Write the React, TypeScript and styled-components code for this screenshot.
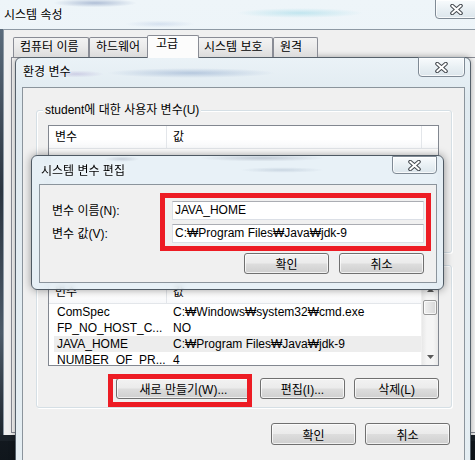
import React from "react";
import styled, { createGlobalStyle } from "styled-components";

const GlobalStyle = createGlobalStyle`
  * { box-sizing: border-box; }
  html, body { margin: 0; padding: 0; }
  body {
    background: #26303a;
    font-family: "Liberation Sans", "Noto Sans CJK KR", sans-serif;
    font-size: 12px;
    color: #000;
  }
`;

const Desktop = styled.div`
  position: relative;
  width: 475px;
  height: 460px;
  overflow: hidden;
  background: linear-gradient(180deg, #4b5b6b 0%, #1c242d 70%, #10161c 100%);
`;

/* ---------- window chrome ---------- */

const OuterWindow = styled.section`
  position: absolute;
  left: 0;
  top: 0;
  width: 482px;
  height: 441px;
  display: flex;
  flex-direction: column;
  background:
    radial-gradient(ellipse 60px 6px at 95px 3px, rgba(60, 90, 150, 0.35), transparent 70%),
    radial-gradient(ellipse 90px 7px at 300px 13px, rgba(110, 200, 220, 0.35), transparent 70%),
    radial-gradient(ellipse 50px 5px at 160px 24px, rgba(120, 150, 200, 0.2), transparent 70%),
    linear-gradient(180deg, #eef5f9 0%, #e3edf3 100%);
`;

const EnvWindow = styled.section`
  position: absolute;
  left: 15px;
  top: 57px;
  width: 456px;
  height: 420px;
  border: 1px solid #56616b;
  border-radius: 6px 6px 0 0;
  padding: 0 5px 0 6px;
  display: flex;
  flex-direction: column;
  background:
    radial-gradient(ellipse 120px 7px at 175px 15px, rgba(70, 110, 170, 0.3), transparent 70%),
    radial-gradient(ellipse 40px 5px at 60px 16px, rgba(90, 60, 160, 0.18), transparent 70%),
    linear-gradient(180deg, #eaf2f7 0%, #e0eaf0 40px, #e5eef3 100%);
  box-shadow: 0 0 6px rgba(0, 0, 0, 0.35);
`;

const EditDialog = styled.section`
  position: absolute;
  left: 31px;
  top: 155px;
  width: 413px;
  height: 135px;
  border: 1px solid #4f5a64;
  border-radius: 6px;
  padding: 0 6px 6px 7px;
  display: flex;
  flex-direction: column;
  background:
    radial-gradient(ellipse 90px 5px at 230px 2px, rgba(120, 130, 150, 0.35), transparent 70%),
    radial-gradient(ellipse 60px 4px at 250px 14px, rgba(130, 150, 175, 0.3), transparent 70%),
    radial-gradient(ellipse 25px 4px at 90px 3px, rgba(120, 130, 150, 0.3), transparent 70%),
    radial-gradient(ellipse 30px 8px at 105px 40px, rgba(140, 160, 190, 0.18), transparent 70%),
    rgba(228, 239, 246, 0.85);
  backdrop-filter: blur(2.5px);
  box-shadow: 0 0 9px rgba(0, 0, 0, 0.4);
`;

const TitleBar = styled.header<{ $h: number; $pl: number; $pr?: number }>`
  flex: none;
  height: ${(p) => p.$h}px;
  display: flex;
  align-items: flex-start;
  padding-left: ${(p) => p.$pl}px;
  padding-right: ${(p) => p.$pr ?? 0}px;
`;

const TitleText = styled.span<{ $mt: number }>`
  margin-top: ${(p) => p.$mt}px;
  line-height: 14px;
  white-space: nowrap;
  text-shadow: 0 0 5px rgba(255, 255, 255, 0.95);
`;

const CloseButton = styled.div<{ $w: number; $h: number; $mt: number }>`
  margin-left: auto;
  margin-top: ${(p) => p.$mt}px;
  width: ${(p) => p.$w}px;
  height: ${(p) => p.$h}px;
  border: 1px solid #7f8a95;
  border-radius: 0 0 4px 4px;
  background: linear-gradient(180deg, #f8fbfd 0%, #e9f0f4 50%, #dce6ec 100%);
  box-shadow: inset 0 0 0 1px rgba(255, 255, 255, 0.75);
  display: flex;
  align-items: center;
  justify-content: center;
`;

const CloseGlyph = () => (
  <svg width="13" height="11" viewBox="0 0 13 11">
    <path d="M2.2 1.8 L10.8 9.2 M10.8 1.8 L2.2 9.2" stroke="#454a50" strokeWidth="4" strokeLinecap="round" fill="none" />
    <path d="M2.2 1.8 L10.8 9.2 M10.8 1.8 L2.2 9.2" stroke="#ffffff" strokeWidth="2" strokeLinecap="round" fill="none" />
  </svg>
);

/* ---------- outer window body ---------- */

const OuterBody = styled.div`
  flex: 1;
  display: flex;
  min-height: 0;
  padding-bottom: 6px;
  background: linear-gradient(180deg, transparent 0, transparent 404px, #1a2128 404px);
`;

const SideFrame = styled.div`
  flex: none;
  width: 3px;
  background: linear-gradient(180deg, #5b6b7b 0%, #2b3540 40%, #4c5a68 75%, #1e262e 100%);
`;

const OuterClient = styled.div`
  flex: 1;
  display: flex;
  flex-direction: column;
  background: #f0f0f0;
  border-top: 1px solid #8d99a4;
  border-left: 1px solid #8d99a4;
  padding: 7px 0 2px 9px;
`;

const TabStrip = styled.div`
  flex: none;
  height: 20px;
  display: flex;
  align-items: flex-end;
`;

const Tab = styled.div<{ $w: number; $active?: boolean }>`
  position: relative;
  z-index: ${(p) => (p.$active ? 2 : 1)};
  width: ${(p) => p.$w + (p.$active ? 4 : 0)}px;
  height: ${(p) => (p.$active ? 23 : 20)}px;
  margin: 0 ${(p) => (p.$active ? -2 : 0)}px ${(p) => (p.$active ? -1 : 0)}px;
  padding: ${(p) => (p.$active ? "1px 0 0 8px" : "2px 0 0 6px")};
  line-height: 14px;
  white-space: nowrap;
  border: 1px solid #898c95;
  border-bottom: none;
  border-radius: 2px 2px 0 0;
  background: ${(p) =>
    p.$active ? "#fcfcfc" : "linear-gradient(180deg, #f3f3f3 0%, #ebebeb 45%, #dcdcdc 100%)"};
`;

const TabPanel = styled.div`
  flex: 1;
  margin-left: -2px;
  border: 1px solid #898c95;
  background: #f7f7f7;
`;

/* ---------- env window content ---------- */

const Client = styled.div<{ $pad: string }>`
  flex: 1;
  display: flex;
  flex-direction: column;
  border: 1px solid #8b949c;
  background: #f0f0f0;
  padding: ${(p) => p.$pad};
`;

const GroupBox = styled.div<{ $mt?: number }>`
  position: relative;
  margin-top: ${(p) => p.$mt ?? 0}px;
  border: 1px solid #d5dfe5;
  border-radius: 3px;
  box-shadow: inset 1px 1px 0 #fff, 1px 1px 0 #fff;
  padding: 14px 12px 8px 11px;
`;

const GroupLabel = styled.span`
  position: absolute;
  left: 6px;
  top: -8px;
  padding: 0 2px;
  line-height: 14px;
  background: #f0f0f0;
  white-space: nowrap;
`;

const ListView = styled.div`
  height: 86px;
  display: flex;
  border: 1px solid #828790;
  background: #fff;
  overflow: hidden;
`;

const ListMain = styled.div`
  flex: 1;
  min-width: 0;
  display: flex;
  flex-direction: column;
`;

const HeaderRow = styled.div`
  flex: none;
  height: 23px;
  display: flex;
  border-bottom: 1px solid #e3e6ea;
  background: linear-gradient(180deg, #ffffff 0%, #ffffff 60%, #f7f8fa 100%);
`;

const HeaderCell = styled.div<{ $w?: number }>`
  ${(p) => (p.$w ? `width: ${p.$w}px; flex: none;` : "flex: 1;")}
  padding-left: 6px;
  line-height: 22px;
  border-right: 1px solid #e3e6ea;
  white-space: nowrap;
  &:last-child {
    border-right: none;
  }
`;

const Row = styled.div<{ $selected?: boolean }>`
  flex: none;
  height: 16px;
  margin-left: 5px;
  display: flex;
  line-height: 16px;
  white-space: nowrap;
  background: ${(p) => (p.$selected ? "#ededed" : "transparent")};
`;

const NameCell = styled.span`
  flex: none;
  width: 112px;
  padding-left: 3px;
  overflow: hidden;
`;

const ValueCell = styled.span`
  flex: 1;
  padding-left: 7px;
  overflow: hidden;
`;

const ScrollBar = styled.div`
  flex: none;
  width: 17px;
  display: flex;
  flex-direction: column;
  background: linear-gradient(90deg, #e8e8e8 0%, #f5f5f5 30%, #f5f5f5 70%, #e8e8e8 100%);
  border-left: 1px solid #f0f0f0;
`;

const ScrollArrow = styled.div`
  flex: none;
  height: 17px;
  display: flex;
  align-items: center;
  justify-content: center;
`;

const ScrollTrack = styled.div`
  flex: 1;
  padding-top: 2px;
`;

const ScrollThumb = styled.div`
  height: 15px;
  margin: 0 1px;
  border: 1px solid #979797;
  border-radius: 2px;
  background: linear-gradient(90deg, #f1f1f1 0%, #e4e4e4 50%, #d8d8d8 100%);
  box-shadow: inset 0 0 0 1px rgba(255, 255, 255, 0.7);
`;

const Arrow = ({ up }: { up?: boolean }) => (
  <svg width="7" height="4" viewBox="0 0 7 4">
    <polygon points={up ? "0,4 7,4 3.5,0" : "0,0 7,0 3.5,4"} fill="#5a5a5a" />
  </svg>
);

const ButtonRow = styled.div<{ $mt: number; $gap: number; $pr?: number; $covered?: boolean }>`
  display: flex;
  justify-content: flex-end;
  gap: ${(p) => p.$gap}px;
  margin-top: ${(p) => p.$mt}px;
  padding-right: ${(p) => p.$pr ?? 0}px;
  visibility: ${(p) => (p.$covered ? "hidden" : "visible")};
`;

const Button = styled.button<{ $w: number; $h?: number }>`
  width: ${(p) => p.$w}px;
  height: ${(p) => p.$h ?? 21}px;
  padding: 0;
  font: inherit;
  color: #000;
  border: 1px solid #707070;
  border-radius: 3px;
  background: linear-gradient(180deg, #f2f2f2 0%, #ebebeb 48%, #dddddd 52%, #cfcfcf 100%);
  box-shadow: inset 0 0 0 1px rgba(255, 255, 255, 0.7);
  white-space: nowrap;
`;

/* ---------- edit dialog ---------- */

const FieldGrid = styled.div`
  display: grid;
  grid-template-columns: 120px 252px;
  row-gap: 4px;
  align-items: center;
`;

const FieldLabel = styled.label`
  line-height: 14px;
  white-space: nowrap;
`;

const TextBox = styled.div`
  height: 19px;
  padding-left: 2px;
  line-height: 17px;
  background: #fff;
  border: 1px solid #dbdfe6;
  border-top-color: #abadb3;
  white-space: nowrap;
`;

const Annotation = styled.div<{ $x: number; $y: number; $w: number; $h: number }>`
  position: absolute;
  left: ${(p) => p.$x}px;
  top: ${(p) => p.$y}px;
  width: ${(p) => p.$w}px;
  height: ${(p) => p.$h}px;
  border: 5px solid #ed1c24;
  pointer-events: none;
  z-index: 10;
`;

/* ---------- data ---------- */

const tabs = [
  { label: "컴퓨터 이름", w: 76 },
  { label: "하드웨어", w: 60 },
  { label: "고급", w: 48, active: true },
  { label: "시스템 보호", w: 76 },
  { label: "원격", w: 45 },
];

const systemVars = [
  { name: "ComSpec", value: "C:₩Windows₩system32₩cmd.exe" },
  { name: "FP_NO_HOST_C...", value: "NO" },
  { name: "JAVA_HOME", value: "C:₩Program Files₩Java₩jdk-9", selected: true },
  { name: "NUMBER_OF_PR...", value: "4" },
];

type Item = { name: string; value: string; selected?: boolean };

const VarList = ({ items, scroll }: { items: Item[]; scroll?: boolean }) => (
  <ListView>
    <ListMain>
      <HeaderRow>
        <HeaderCell $w={118}>변수</HeaderCell>
        <HeaderCell $w={255}>값</HeaderCell>
        {!scroll && <HeaderCell />}
      </HeaderRow>
      {items.map((it) => (
        <Row key={it.name} $selected={it.selected}>
          <NameCell>{it.name}</NameCell>
          <ValueCell>{it.value}</ValueCell>
        </Row>
      ))}
    </ListMain>
    {scroll && (
      <ScrollBar>
        <ScrollArrow>
          <Arrow up />
        </ScrollArrow>
        <ScrollTrack>
          <ScrollThumb />
        </ScrollTrack>
        <ScrollArrow>
          <Arrow />
        </ScrollArrow>
      </ScrollBar>
    )}
  </ListView>
);

const VarGroup = ({
  title,
  items,
  scroll,
  mt,
  covered,
}: {
  title: string;
  items: Item[];
  scroll?: boolean;
  mt?: number;
  covered?: boolean;
}) => (
  <GroupBox $mt={mt}>
    <GroupLabel>{title}</GroupLabel>
    <VarList items={items} scroll={scroll} />
    <ButtonRow $mt={12} $gap={9} $covered={covered}>
      <Button $w={135}>새로 만들기(W)...</Button>
      <Button $w={85}>편집(I)...</Button>
      <Button $w={85}>삭제(L)</Button>
    </ButtonRow>
  </GroupBox>
);

export default function App() {
  return (
    <>
      <GlobalStyle />
      <Desktop>
        <OuterWindow>
          <TitleBar $h={29} $pl={4} $pr={4}>
            <TitleText $mt={8}>시스템 속성</TitleText>
            <CloseButton $w={43} $h={20} $mt={-1}>
              <CloseGlyph />
            </CloseButton>
          </TitleBar>
          <OuterBody>
            <SideFrame />
            <OuterClient>
              <TabStrip>
                {tabs.map((t) => (
                  <Tab key={t.label} $w={t.w} $active={t.active}>
                    {t.label}
                  </Tab>
                ))}
              </TabStrip>
              <TabPanel />
            </OuterClient>
          </OuterBody>
        </OuterWindow>

        <EnvWindow>
          <TitleBar $h={29} $pl={1}>
            <TitleText $mt={7}>환경 변수</TitleText>
            <CloseButton $w={47} $h={20} $mt={-1}>
              <CloseGlyph />
            </CloseButton>
          </TitleBar>
          <Client $pad="22px 12px 0 13px">
            <VarGroup title="student에 대한 사용자 변수(U)" items={[]} covered />
            <VarGroup title="시스템 변수(S)" items={systemVars} scroll mt={12} />
            <ButtonRow $mt={15} $gap={9} $pr={2}>
              <Button $w={85} $h={22}>확인</Button>
              <Button $w={85} $h={22}>취소</Button>
            </ButtonRow>
          </Client>
        </EnvWindow>

        <EditDialog>
          <TitleBar $h={28} $pl={2}>
            <TitleText $mt={8}>시스템 변수 편집</TitleText>
            <CloseButton $w={45} $h={18} $mt={0}>
              <CloseGlyph />
            </CloseButton>
          </TitleBar>
          <Client $pad="16px 12px 0 12px">
            <FieldGrid>
              <FieldLabel>변수 이름(N):</FieldLabel>
              <TextBox>JAVA_HOME</TextBox>
              <FieldLabel>변수 값(V):</FieldLabel>
              <TextBox>C:₩Program Files₩Java₩jdk-9</TextBox>
            </FieldGrid>
            <ButtonRow $mt={10} $gap={10}>
              <Button $w={85}>확인</Button>
              <Button $w={85}>취소</Button>
            </ButtonRow>
          </Client>
        </EditDialog>

        <Annotation $x={160} $y={193} $w={271} $h={58} />
        <Annotation $x={108} $y={374} $w={144} $h={33} />
      </Desktop>
    </>
  );
}
